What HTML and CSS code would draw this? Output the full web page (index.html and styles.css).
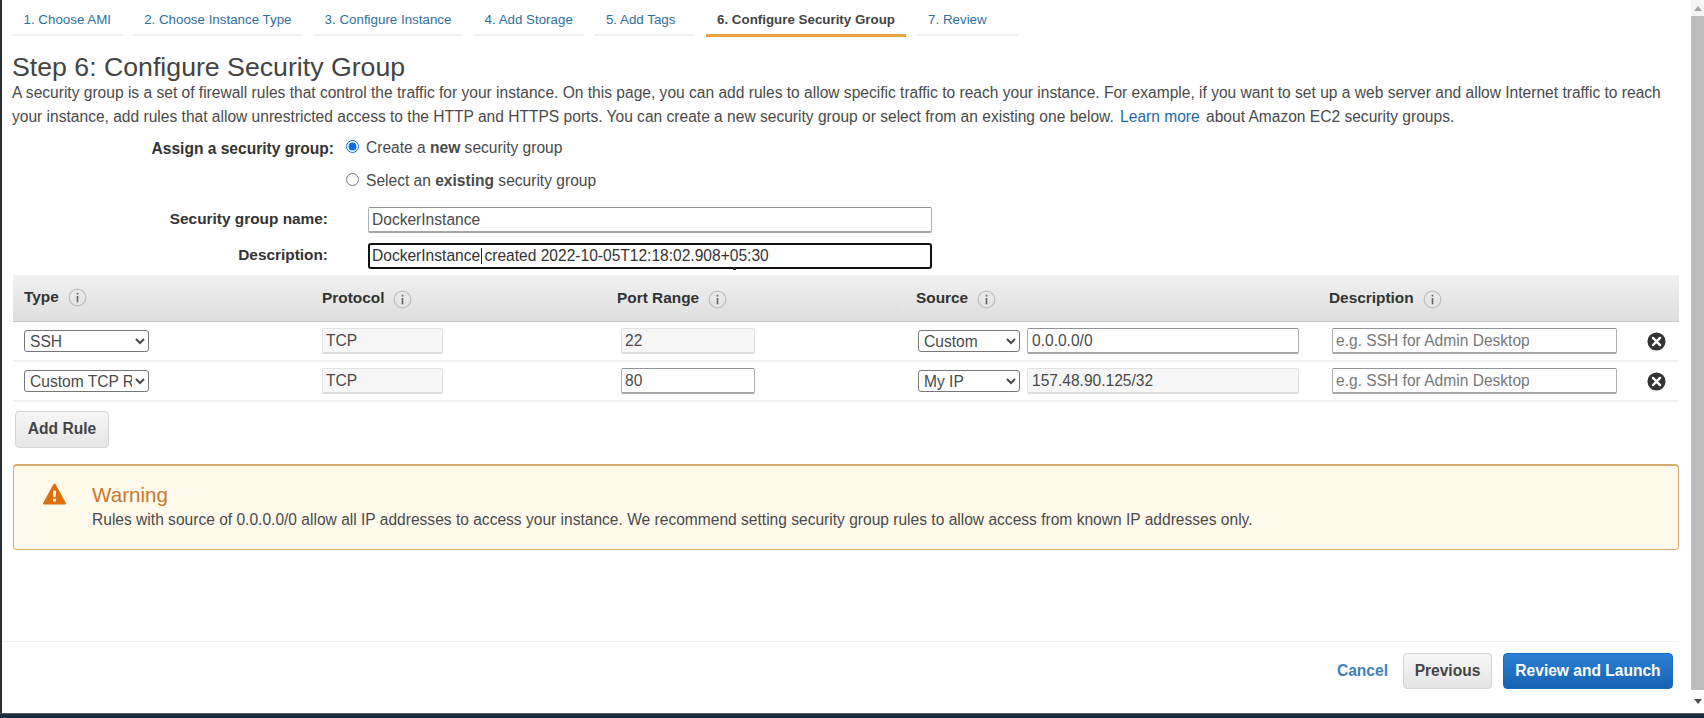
FILE: index.html
```html
<!DOCTYPE html>
<html lang="en">
<head>
<meta charset="utf-8">
<title>Step 6: Configure Security Group</title>
<link rel="stylesheet" href="styles.css">
</head>
<body>
<div class="window">
  <main class="main">
    <nav class="tabs">
      <a class="tab">1. Choose AMI</a>
      <a class="tab">2. Choose Instance Type</a>
      <a class="tab">3. Configure Instance</a>
      <a class="tab">4. Add Storage</a>
      <a class="tab">5. Add Tags</a>
      <a class="tab tab-active">6. Configure Security Group</a>
      <a class="tab">7. Review</a>
    </nav>
    <h1 class="title">Step 6: Configure Security Group</h1>
    <p class="intro">A security group is a set of firewall rules that control the traffic for your instance. On this page, you can add rules to allow specific traffic to reach your instance. For example, if you want to set up a web server and allow Internet traffic to reach your instance, add rules that allow unrestricted access to the HTTP and HTTPS ports. You can create a new security group or select from an existing one below. <a class="link">Learn more</a> about Amazon EC2 security groups.</p>

    <div class="assign">
      <div class="assign-label">Assign a security group:</div>
      <label class="radio-row"><input class="radio" type="radio" name="sg" checked><span>Create a <b>new</b> security group</span></label>
      <label class="radio-row radio-second"><input class="radio" type="radio" name="sg"><span>Select an <b>existing</b> security group</span></label>
    </div>

    <div class="field">
      <label class="field-label">Security group name:</label>
      <input class="text field-input" value="DockerInstance">
    </div>
    <div class="field field-desc">
      <label class="field-label">Description:</label>
      <div class="focus-wrap">
        <input class="text field-input focused" value="DockerInstance created 2022-10-05T12:18:02.908+05:30">
        <span class="caret"></span>
        <span class="pointer"></span>
      </div>
    </div>

    <div class="rules">
      <div class="rule-head">
        <div class="th">Type <svg class="info" viewBox="0 0 20 20"><circle cx="10" cy="10" r="8.8"/><path d="M10 8.5v6.5M10 5v1.8"/></svg></div>
        <div class="th">Protocol <svg class="info" viewBox="0 0 20 20"><circle cx="10" cy="10" r="8.8"/><path d="M10 8.5v6.5M10 5v1.8"/></svg></div>
        <div class="th">Port Range <svg class="info" viewBox="0 0 20 20"><circle cx="10" cy="10" r="8.8"/><path d="M10 8.5v6.5M10 5v1.8"/></svg></div>
        <div class="th">Source <svg class="info" viewBox="0 0 20 20"><circle cx="10" cy="10" r="8.8"/><path d="M10 8.5v6.5M10 5v1.8"/></svg></div>
        <div class="th">Description <svg class="info" viewBox="0 0 20 20"><circle cx="10" cy="10" r="8.8"/><path d="M10 8.5v6.5M10 5v1.8"/></svg></div>
        <div class="th"></div>
      </div>
      <div class="rule-row">
        <div class="td"><select class="sel sel-type"><option>SSH</option><option>Custom TCP Rule</option></select></div>
        <div class="td"><input class="text off proto" value="TCP" readonly></div>
        <div class="td"><input class="text off port" value="22" readonly></div>
        <div class="td source"><select class="sel sel-src"><option>Custom</option><option>My IP</option></select><input class="text cidr" value="0.0.0.0/0"></div>
        <div class="td"><input class="text desc" placeholder="e.g. SSH for Admin Desktop"></div>
        <div class="td"><svg class="remove" viewBox="0 0 20 20"><circle cx="10" cy="10" r="9.5"/><path d="M6.3 6.3l7.4 7.4M13.7 6.3l-7.4 7.4"/></svg></div>
      </div>
      <div class="rule-row">
        <div class="td"><select class="sel sel-type"><option>Custom TCP Rule</option><option>SSH</option></select></div>
        <div class="td"><input class="text off proto" value="TCP" readonly></div>
        <div class="td"><input class="text port" value="80"></div>
        <div class="td source"><select class="sel sel-src"><option>My IP</option><option>Custom</option></select><input class="text off cidr" value="157.48.90.125/32" readonly></div>
        <div class="td"><input class="text desc" placeholder="e.g. SSH for Admin Desktop"></div>
        <div class="td"><svg class="remove" viewBox="0 0 20 20"><circle cx="10" cy="10" r="9.5"/><path d="M6.3 6.3l7.4 7.4M13.7 6.3l-7.4 7.4"/></svg></div>
      </div>
    </div>

    <button class="btn add-rule" type="button">Add Rule</button>

    <section class="warning">
      <svg class="warn-icon" viewBox="0 0 22 21"><path class="warn-tri" d="M11 1.5L21 19.5H1z"/><path class="warn-mark" d="M9.6 7.5h2.8l-.4 6.2h-2zM9.6 15h2.8v2.6H9.6z"/></svg>
      <div>
        <div class="warn-title">Warning</div>
        <div class="warn-text">Rules with source of 0.0.0.0/0 allow all IP addresses to access your instance. We recommend setting security group rules to allow access from known IP addresses only.</div>
      </div>
    </section>

    <footer class="footer">
      <a class="cancel">Cancel</a>
      <button class="btn previous" type="button">Previous</button>
      <button class="btn primary" type="button">Review and Launch</button>
    </footer>
  </main>
  <aside class="scrollbar">
    <div class="sb-btn"><span class="arrow-up"></span></div>
    <div class="sb-thumb"></div>
    <div class="sb-btn sb-btn-end"><span class="arrow-down"></span></div>
  </aside>
</div>
<div class="bottom-bar"></div>
</body>
</html>
```

FILE: styles.css
```css
* { box-sizing: border-box; }
html, body { margin: 0; height: 100%; overflow: hidden; background: #fff; }
body {
  font-family: "Liberation Sans", Arial, sans-serif;
  color: #4a4a4a;
  font-size: 15.57px;
  display: flex;
  flex-direction: column;
}
.window { flex: 1; display: flex; min-height: 0; }
.main {
  flex: 1;
  min-width: 0;
  display: flex;
  flex-direction: column;
  border-left: 2px solid #2a2f36;
  padding-left: 10px;
  padding-right: 12px;
}
.scrollbar { width: 13px; display: flex; flex-direction: column; background: #f1f1f1; }
.sb-btn { height: 16px; background: #f4f4f4; display: flex; align-items: center; justify-content: center; }
.sb-btn-end { height: 23px; background: #fff; }
.sb-thumb { flex: 1; background: #bdbdbd; }
.arrow-up, .arrow-down { width: 0; height: 0; border-left: 4px solid transparent; border-right: 4px solid transparent; }
.arrow-up { border-bottom: 5px solid #a3a3a3; }
.arrow-down { border-top: 5px solid #505050; }
.bottom-bar { height: 5px; background: #1e2a38; border-top: 1px solid #56606c; }

.tabs { display: flex; gap: 10.1px; height: 37px; }
.tab {
  height: 36px;
  min-width: 101px;
  padding: 12px 11.5px 0;
  font-size: 13.35px;
  line-height: 16px;
  color: #2f6f9c;
  border-bottom: 2px solid #f0f0f0;
  white-space: nowrap;
}
.tab-active { color: #444; font-weight: bold; border-bottom: 3px solid #e8a33d; height: 37px; }

.title { margin: 15px 0 0; font-size: 26.7px; line-height: 30px; font-weight: normal; color: #444; }
.intro { margin: -1px 0 0; line-height: 24px; }
.link { color: #1e6aa6; margin: 0 2px; }

.assign { display: grid; grid-template-columns: 322px 1fr; margin-top: 3px; }
.assign-label { font-weight: bold; color: #333; text-align: right; line-height: 32px; padding-top: 1px; }
.radio-row { grid-column: 2; display: flex; align-items: center; height: 32px; padding-left: 12px; }
.assign-label + .radio-row { grid-row: 1; }
.radio { margin: -3px 7px 0 0; width: 13px; height: 13px; accent-color: #0a6fe0; }

.field { display: grid; grid-template-columns: 316px 564px; column-gap: 40px; align-items: center; margin-top: 10px; }
.field-label { font-weight: bold; color: #333; text-align: right; padding-bottom: 3px; font-size: 15.4px; }
.focus-wrap { position: relative; }
.text {
  font: inherit;
  color: #4a4a4a;
  height: 26px;
  border: 1px solid #aab0b5;
  border-top-color: #8d9398;
  border-bottom: 2px solid #a5a5a5;
  border-radius: 2px;
  padding: 0 3px;
  background: #fff;
  outline: none;
}
.field-input { width: 564px; }
.focused { border: 2px solid #111; border-radius: 3px; padding: 0 2px; color: #333; }
.caret { position: absolute; left: 113px; top: 5px; width: 1px; height: 16px; background: #222; }
.pointer { position: absolute; left: 365px; top: 24px; width: 3px; height: 3px; background: #222; }

.rules { margin-top: 6px; }
.rule-head, .rule-row { display: grid; grid-template-columns: 296px 295px 299px 413px 319px 1fr; margin-left: 1px; }
.rule-head {
  height: 47px;
  background: linear-gradient(#f1f1f1, #dedede);
  border-bottom: 1px solid #ccc;
}
.rule-head .th:first-child, .rule-row .td:first-child { padding-left: 11px; }
.th {
  display: flex;
  align-items: center;
  gap: 9px;
  padding-left: 12px;
  padding-bottom: 3px;
  font-weight: bold;
  font-size: 15.4px;
  color: #333;
}
.th + .th { border-left: 1px solid #e9e9e9; margin: 13px 0; padding-bottom: 0; height: 20px; }
.info { width: 19px; height: 19px; margin-top: 2px; fill: none; stroke: #bdbdbd; stroke-width: 1.3; }
.info path { stroke: #666; stroke-width: 1.7; }
.rule-row { height: 40px; border-bottom: 2px solid #f0f0f0; }
.td { display: flex; align-items: center; padding-left: 12px; }
.sel {
  height: 22px;
  font: inherit;
  color: #4a4a4a;
  background: #fff;
  border: 1px solid #767676;
  border-radius: 3px;
  padding: 0 0 0 1px;
  outline: none;
}
.sel-type { width: 125px; }
.sel-src { width: 102px; margin-left: 3px; }
.source { gap: 7px; }
.off { background: #f6f6f6; border: 1px solid #e2e2e2; border-bottom: 2px solid #dcdcdc; }
.proto { width: 121px; margin-left: 1px; }
.port { width: 134px; margin-left: 5px; }
.cidr { width: 272px; padding-left: 4px; }
.desc { width: 285px; margin-left: 4px; }
.desc::placeholder { color: #777; opacity: 1; }
.remove { width: 19px; height: 19px; }
.remove circle { fill: #333; }
.remove path { stroke: #fff; stroke-width: 2.6; stroke-linecap: round; fill: none; }

.btn { font: inherit; font-weight: bold; border-radius: 4px; cursor: pointer; padding: 0 0 1px; }
.add-rule, .previous {
  color: #444;
  background: linear-gradient(#f6f6f6, #e6e6e6);
  border: 1px solid #d5d5d5;
}
.add-rule { align-self: flex-start; width: 94px; height: 37px; margin: 9px 0 0 3px; }

.warning {
  margin: 16px 0 0 1px;
  height: 86px;
  display: flex;
  align-items: flex-start;
  background: #fffaeb;
  border: 1px solid #d9aa6e;
  border-top-width: 2px;
  border-radius: 4px;
  padding: 16px 0 0 29px;
}
.warn-icon { width: 23px; height: 22px; margin: 1px 26px 0 0; flex: none; }
.warn-tri { fill: #dd6f0c; stroke: #dd6f0c; stroke-width: 2; stroke-linejoin: round; }
.warn-mark { fill: #fff; }
.warn-title { font-size: 20.6px; line-height: 26px; color: #c9782c; }
.warn-text { line-height: 24px; color: #4a4a4a; }

.footer {
  margin-top: auto;
  height: 72px;
  margin-left: -10px;
  border-top: 1px solid #f2f2f2;
  display: flex;
  align-items: flex-start;
  justify-content: flex-end;
  padding: 11px 6px 0 0;
}
.cancel { font-weight: bold; color: #3d7fc1; margin: 9px 15px 0 0; }
.previous { width: 89px; height: 36px; margin-right: 11px; }
.primary {
  width: 170px;
  height: 36px;
  color: #fff;
  background: linear-gradient(#2c7fd6, #1763b0);
  border: 1px solid #1a6cbf;
}
```
